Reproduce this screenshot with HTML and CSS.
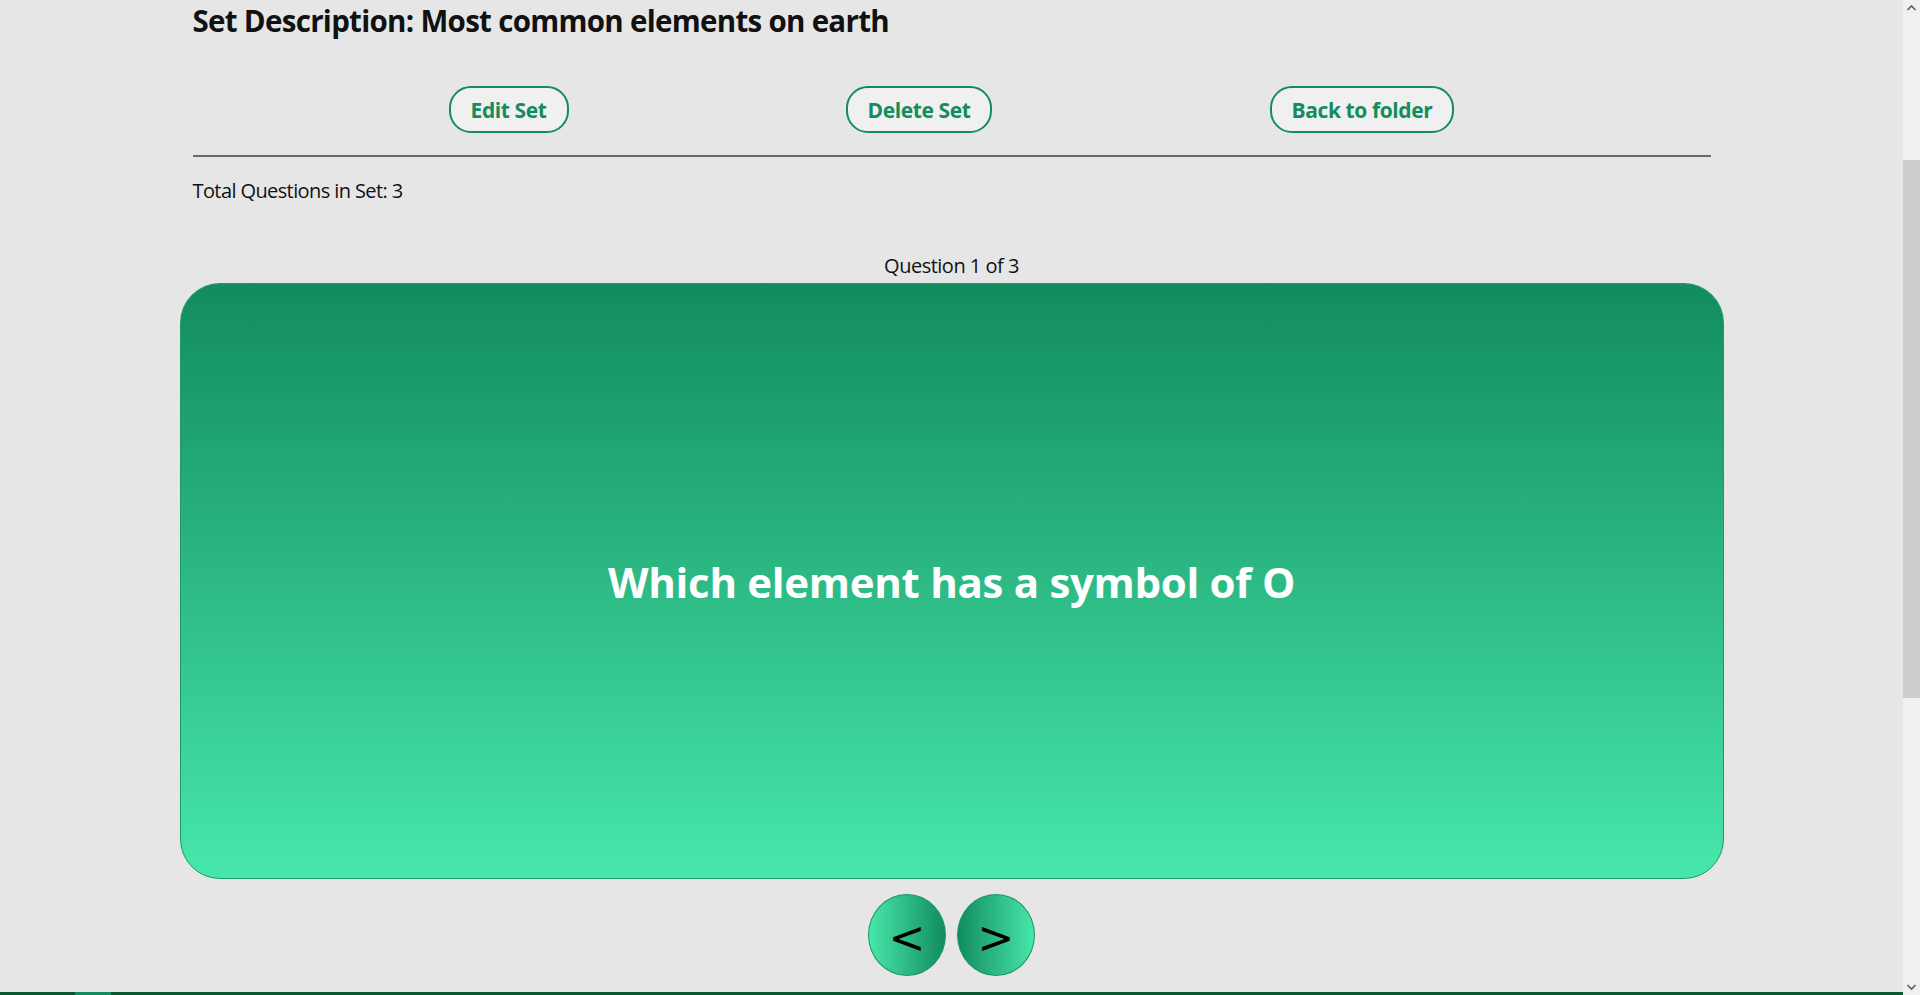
FILE: index.html
```html
<!DOCTYPE html>
<html lang="en">
<head>
<meta charset="utf-8">
<title>Study Set</title>
<link rel="stylesheet" href="styles.css">
</head>
<body>
<header class="site-header">
  <nav class="navbar"></nav>
</header>
<main class="page">
  <div class="wrap">
    <h2 class="set-desc">Set Description: Most common elements on earth</h2>
    <div class="actions">
      <button class="pill-btn">Edit Set</button>
      <button class="pill-btn">Delete Set</button>
      <button class="pill-btn">Back to folder</button>
    </div>
    <hr class="divider">
    <p class="total">Total Questions in Set: 3</p>
    <p class="counter">Question 1 of 3</p>
  </div>
  <div class="card">
    <p class="card-text">Which element has a symbol of O</p>
  </div>
  <div class="nav-row">
    <button class="nav-btn prev">&lt;</button>
    <button class="nav-btn next">&gt;</button>
  </div>
</main>
<footer class="site-footer">
  <div class="footer-accent"></div>
</footer>
<div class="scrollbar">
  <svg class="sb-arrow sb-up" width="17" height="17" viewBox="0 0 17 17"><path d="M4.5 10 L8.5 6 L12.5 10" fill="none" stroke="#606060" stroke-width="1.6"/></svg>
  <div class="sb-thumb"></div>
  <svg class="sb-arrow sb-down" width="17" height="17" viewBox="0 0 17 17"><path d="M4.5 7 L8.5 11 L12.5 7" fill="none" stroke="#606060" stroke-width="1.6"/></svg>
</div>
<script src="script.js"></script>
</body>
</html>
```
FILE: styles.css
```css
html {
  background: #e6e6e6;
}
body {
  margin: 0;
  padding-right: 17px;
  background: #e6e6e6;
  font-family: "Open Sans", "Liberation Sans", sans-serif;
  color: #111;
}
.site-header {
  height: 264px;
}
.navbar {
  height: 70px;
  background: #0b5731;
}
.wrap {
  width: 1518px;
  margin: 0 auto;
}
.page {
  display: flex;
  flex-direction: column;
  align-items: center;
}
.page .wrap {
  display: flex;
  flex-direction: column;
}
.set-desc {
  margin: 0;
  padding-top: 1px;
  font-size: 29.5px;
  line-height: 40px;
  font-weight: 700;
  letter-spacing: -0.7px;
}
.actions {
  margin-top: 45px;
  display: flex;
  justify-content: space-evenly;
}
.pill-btn {
  margin: 0 21px;
  padding: 9px 20px 8px;
  font-family: inherit;
  font-size: 21px;
  line-height: 26px;
  font-weight: 700;
  letter-spacing: -0.4px;
  color: #138c5e;
  background: #f0f0f0;
  border: 2px solid #138c5e;
  border-radius: 22px;
}
.divider {
  margin: 22px 0 0;
  border: 0;
  height: 2px;
  background: #6a6a6a;
}
.total {
  margin: 20px 0 0;
  font-size: 20px;
  line-height: 27px;
  letter-spacing: -0.6px;
}
.counter {
  margin: 48px 0 0;
  font-size: 20px;
  line-height: 27px;
  letter-spacing: -0.5px;
  text-align: center;
}
.card {
  margin-top: 4px;
  width: 1544px;
  height: 596px;
  box-sizing: border-box;
  border: 1px solid #1c9869;
  border-radius: 40px;
  background: linear-gradient(to bottom, #128c5e, #47e7ab);
  display: flex;
  align-items: center;
  justify-content: center;
}
.card-text {
  margin: 0;
  color: #fff;
  font-size: 42px;
  font-weight: 700;
  letter-spacing: -0.3px;
}
.nav-row {
  margin-top: 15px;
  display: flex;
  gap: 11px;
}
.nav-btn {
  width: 78px;
  height: 82px;
  padding: 6px 0 0;
  border: 1px solid #1a9467;
  border-radius: 50%;
  font-family: "DejaVu Sans", sans-serif;
  font-size: 44px;
  line-height: 1;
  color: #000;
  display: flex;
  align-items: center;
  justify-content: center;
}
.prev {
  background: linear-gradient(to right, #47e7ab, #128c5e);
}
.next {
  background: linear-gradient(to right, #128c5e, #47e7ab);
}
.site-footer {
  margin-top: 16px;
  height: 521px;
  background: #0b5731;
}
.footer-accent {
  margin-left: 75px;
  width: 36px;
  height: 4px;
  background: #128c5e;
}
.scrollbar {
  position: fixed;
  top: 0;
  right: 0;
  width: 17px;
  height: 100%;
  background: #f0f0f0;
}
.sb-arrow {
  position: absolute;
  left: 0;
  display: block;
}
.sb-up {
  top: 0;
}
.sb-down {
  bottom: 0;
}
.sb-thumb {
  position: absolute;
  left: 0;
  top: 160px;
  width: 17px;
  height: 538px;
  background: #cdcdcd;
}
```
FILE: script.js
```js
history.scrollRestoration = 'manual';
window.scrollTo(0, 264);
window.addEventListener('load', function () { window.scrollTo(0, 264); });
```
